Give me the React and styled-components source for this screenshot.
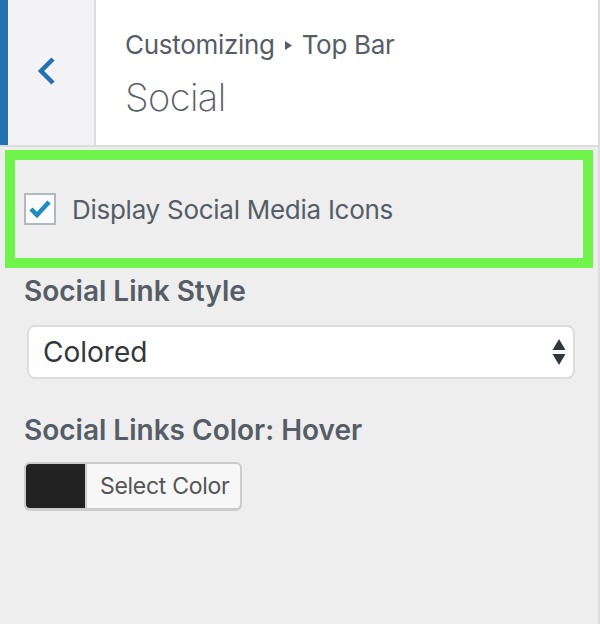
import React from "react";
import styled, { createGlobalStyle } from "styled-components";

const Global = createGlobalStyle`
  html, body { margin: 0; padding: 0; background: #eeeeee; }
  body { font-family: "Inter", "Liberation Sans", sans-serif; }
  * { box-sizing: border-box; }
`;

const Panel = styled.div`
  width: 600px;
  height: 624px;
  background: #eeeeee;
  border-right: 2px solid #dddddd;
  display: flex;
  flex-direction: column;
`;

const Header = styled.div`
  display: flex;
  height: 147px;
  background: #ffffff;
  border-bottom: 2px solid #dddddd;
`;

const BackButton = styled.div`
  width: 96px;
  flex: none;
  background: #f3f3f5;
  border-left: 8px solid #2271b1;
  border-right: 2px solid #dddddd;
  display: flex;
  align-items: center;
  justify-content: center;
  padding-right: 8px;
  padding-bottom: 2px;
`;

const TitleArea = styled.div`
  padding: 32px 0 0 29px;
  display: flex;
  flex-direction: column;
  gap: 19px;
  color: #555d66;
`;

const Breadcrumb = styled.div`
  display: flex;
  align-items: center;
  gap: 10px;
  font-size: 26px;
  line-height: 26px;
  letter-spacing: -0.3px;
`;

const SectionTitle = styled.div`
  font-size: 38px;
  line-height: 40px;
  font-weight: 200;
  letter-spacing: -0.6px;
`;

const Body = styled.div`
  display: flex;
  flex-direction: column;
  padding: 3px 0 0 0;
`;

const Highlight = styled.div`
  margin-left: 5px;
  width: 588px;
  height: 118px;
  border: 10px solid #70f34b;
  display: flex;
  align-items: center;
  padding: 0 0 0 9px;
  gap: 16px;
`;

const Checkbox = styled.div`
  width: 32px;
  height: 32px;
  border: 2px solid #b4b9be;
  background: #fbfbfb;
  display: flex;
  align-items: center;
  justify-content: center;
`;

const CheckLabel = styled.span`
  font-size: 26px;
  line-height: 26px;
  letter-spacing: -0.27px;
  color: #555d66;
  padding-top: 2px;
`;

const ControlTitle = styled.div`
  font-size: 28px;
  line-height: 28px;
  font-weight: 600;
  color: #555d66;
  margin: ${(p) => p.$top}px 0 0 24px;
`;

const SelectBox = styled.div`
  margin: 20px 0 0 27px;
  width: 548px;
  height: 54px;
  background: #ffffff;
  border: 2px solid #dddddd;
  border-radius: 8px;
  display: flex;
  align-items: center;
  justify-content: space-between;
  padding: 0 7px 0 14px;
  font-size: 28px;
  line-height: 28px;
  color: #32373c;
`;

const ColorButton = styled.div`
  margin: 18px 0 0 24px;
  width: 218px;
  height: 48px;
  display: flex;
  border: 2px solid #cccccc;
  border-radius: 6px;
  background: #f7f7f7;
  box-shadow: 0 1px 0 #cccccc;
  overflow: hidden;
`;

const Swatch = styled.div`
  width: 61px;
  background: #222222;
  border-right: 2px solid #cccccc;
  flex: none;
`;

const ButtonText = styled.div`
  flex: 1;
  display: flex;
  align-items: center;
  padding-left: 13px;
  font-size: 23px;
  line-height: 24px;
  letter-spacing: -0.3px;
  color: #555555;
`;

export default function App() {
  return (
    <>
      <Global />
      <Panel>
        <Header>
          <BackButton>
            <svg width="20" height="32" viewBox="0 0 20 32">
              <polyline
                points="16,3 4,15 16,27"
                fill="none"
                stroke="#2271b1"
                strokeWidth="4.5"
              />
            </svg>
          </BackButton>
          <TitleArea>
            <Breadcrumb>
              <span>Customizing</span>
              <svg width="7" height="9" viewBox="0 0 7 9">
                <polygon points="0,0 7,4.5 0,9" fill="#555d66" />
              </svg>
              <span>Top Bar</span>
            </Breadcrumb>
            <SectionTitle>Social</SectionTitle>
          </TitleArea>
        </Header>
        <Body>
          <Highlight>
            <Checkbox>
              <svg width="24" height="20" viewBox="0 0 24 20">
                <polyline
                  points="3,10 9,16 21,3"
                  fill="none"
                  stroke="#1e8cbe"
                  strokeWidth="4.5"
                />
              </svg>
            </Checkbox>
            <CheckLabel>Display Social Media Icons</CheckLabel>
          </Highlight>
          <ControlTitle $top={9}>Social Link Style</ControlTitle>
          <SelectBox>
            <span>Colored</span>
            <svg width="14" height="27" viewBox="0 0 14 27">
              <polygon points="7,0 13.5,11 0.5,11" fill="#32373c" />
              <polygon points="0.5,15 13.5,15 7,26" fill="#32373c" />
            </svg>
          </SelectBox>
          <ControlTitle $top={37}>Social Links Color: Hover</ControlTitle>
          <ColorButton>
            <Swatch />
            <ButtonText>Select Color</ButtonText>
          </ColorButton>
        </Body>
      </Panel>
    </>
  );
}
